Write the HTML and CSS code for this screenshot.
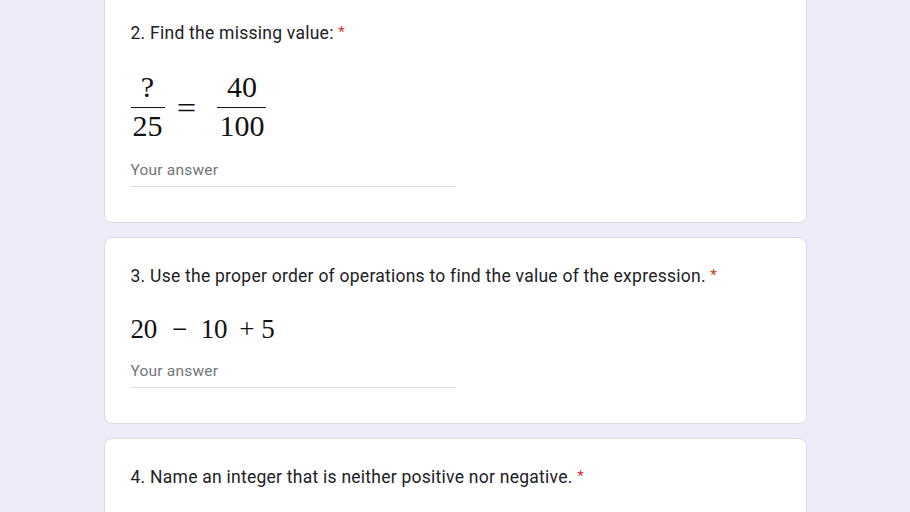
FILE: index.html
```html
<!DOCTYPE html>
<html lang="en">
<head>
<meta charset="utf-8">
<title>Quiz</title>
<link rel="stylesheet" href="styles.css">
</head>
<body>
<main class="form">
  <section class="card card-first">
    <div class="q-title">2. Find the missing value: <span class="req">*</span></div>
    <div class="math math-frac">
      <span class="frac"><span class="num">?</span><span class="den">25</span></span>
      <span class="eq">=</span>
      <span class="frac"><span class="num">40</span><span class="den">100</span></span>
    </div>
    <div class="answer answer-frac">Your answer</div>
  </section>
  <section class="card">
    <div class="q-title">3. Use the proper order of operations to find the value of the expression. <span class="req">*</span></div>
    <div class="math math-expr">
      <span>20</span><span class="op">−</span><span>10</span><span class="op op-plus">+</span><span>5</span>
    </div>
    <div class="answer">Your answer</div>
  </section>
  <section class="card">
    <div class="q-title">4. Name an integer that is neither positive nor negative. <span class="req">*</span></div>
  </section>
</main>
</body>
</html>
```
FILE: styles.css
```css
html, body {
  margin: 0;
  padding: 0;
  background: #f0ebf8;
  height: 100%;
  overflow: hidden;
}
body {
  font-family: Roboto, "Noto Sans", Arial, sans-serif;
  color: #202124;
}
.form {
  width: 703px;
  margin: -6px auto 0;
  display: flex;
  flex-direction: column;
  gap: 14px;
}
.card {
  background: #fff;
  border: 1px solid #dadce0;
  border-radius: 8px;
  padding: 25px 26px 35px;
}
.q-title {
  font-size: 17.5px;
  line-height: 24px;
  letter-spacing: 0.25px;
}
.req {
  color: #d93025;
  font-size: 15px;
  vertical-align: 2px;
}
.math {
  font-family: "Liberation Serif", "Times New Roman", serif;
  color: #111;
  display: flex;
  align-items: center;
}
.math-frac {
  margin-top: 25px;
  font-size: 30px;
}
.frac {
  display: inline-flex;
  flex-direction: column;
  align-items: stretch;
}
.num {
  line-height: 34px;
  padding: 0 2px 3px;
  border-bottom: 1.5px solid #111;
  text-align: center;
}
.den {
  line-height: 34px;
  padding: 1px 2px 0;
  text-align: center;
}
.eq {
  margin: 2px 23px 0 13px;
  line-height: 34px;
  display: inline-block;
  transform: scaleX(1.15);
}
.math-expr {
  margin-top: 24px;
  font-size: 27px;
  line-height: 34px;
  letter-spacing: -0.3px;
}
.op {
  margin: 0 14px 0 15px;
}
.op-plus {
  margin: 0 7px 0 12px;
}
.answer {
  width: 325px;
  margin-top: 15px;
  font-size: 15.5px;
  line-height: 20px;
  color: #70757a;
  padding-bottom: 6px;
  border-bottom: 1px solid #dadce0;
  letter-spacing: 0.2px;
}
.answer-frac {
  margin-top: 17px;
}
```
